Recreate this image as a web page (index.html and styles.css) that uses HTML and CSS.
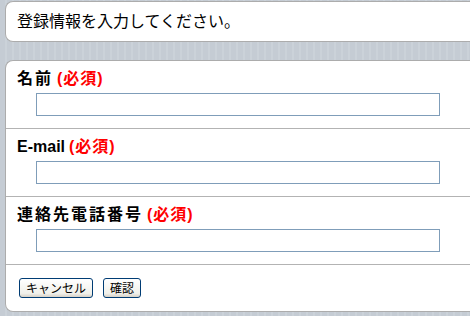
FILE: index.html
```html
<!DOCTYPE html>
<html>
<head>
    <title>登録情報</title>
    <link rel="stylesheet" href="styles.css">
</head>
<body>
    <div class="page">
        <div class="panel intro">登録情報を入力してください。</div>

        <form class="panel form">
            <div class="field">
                <label class="field-label"><span class="name">名前</span><span class="req">(必須)</span></label>
                <input class="field-input" type="text">
            </div>
            <div class="field">
                <label class="field-label"><span class="name latin">E-mail</span><span class="req">(必須)</span></label>
                <input class="field-input" type="text">
            </div>
            <div class="field">
                <label class="field-label"><span class="name">連絡先電話番号</span><span class="req">(必須)</span></label>
                <input class="field-input" type="text">
            </div>
            <div class="actions">
                <button type="button" class="btn">キャンセル</button>
                <button type="button" class="btn">確認</button>
            </div>
        </form>
    </div>
</body>
</html>
```

FILE: styles.css
```css
html, body {
    margin: 0;
    height: 100%;
}

body {
    background: repeating-linear-gradient(90deg, #c5ccd4 0, #c5ccd4 5px, #cbd2d9 5px, #cbd2d9 7px);
    font-family: "Liberation Sans", "Noto Sans CJK JP", sans-serif;
    color: #000;
}

.page {
    padding: 1px 0 0 5px;
}

/* White rounded panels, open on the right */
.panel {
    background: #fff;
    border: 1px solid #acacac;
    border-right: none;
    border-radius: 8px 0 0 8px;
}

.intro {
    height: 39px;
    line-height: 39px;
    padding-left: 11px;
    font-size: 16px;
}

.form {
    margin: 18px 0 0;
}

.field {
    display: flex;
    flex-direction: column;
    padding: 8px 11px 12px;
    border-bottom: 1px solid #b3b3b3;
}

.field-label {
    font-size: 16px;
    font-weight: bold;
    line-height: 20px;
    height: 20px;
}

.name {
    letter-spacing: 2px;
}

.name.latin {
    letter-spacing: 0;
}

.req {
    color: #f00;
    letter-spacing: 1px;
    margin-left: 4px;
}

.field-input {
    box-sizing: border-box;
    margin: 4px 0 0 19px;
    width: 404px;
    height: 23px;
    border: 1px solid #7f9db9;
    padding: 0 3px;
    font-size: 13px;
    background: #fff;
}

.actions {
    display: flex;
    gap: 10px;
    padding: 13px 13px;
}

.btn {
    height: 20px;
    padding: 0 6px;
    border: 1px solid #003c74;
    border-radius: 3px;
    background: linear-gradient(#ffffff, #f0f0ea 80%, #d6d0c5);
    font-family: "Noto Sans CJK JP", sans-serif;
    font-size: 12px;
    line-height: 18px;
    color: #000;
}
```
